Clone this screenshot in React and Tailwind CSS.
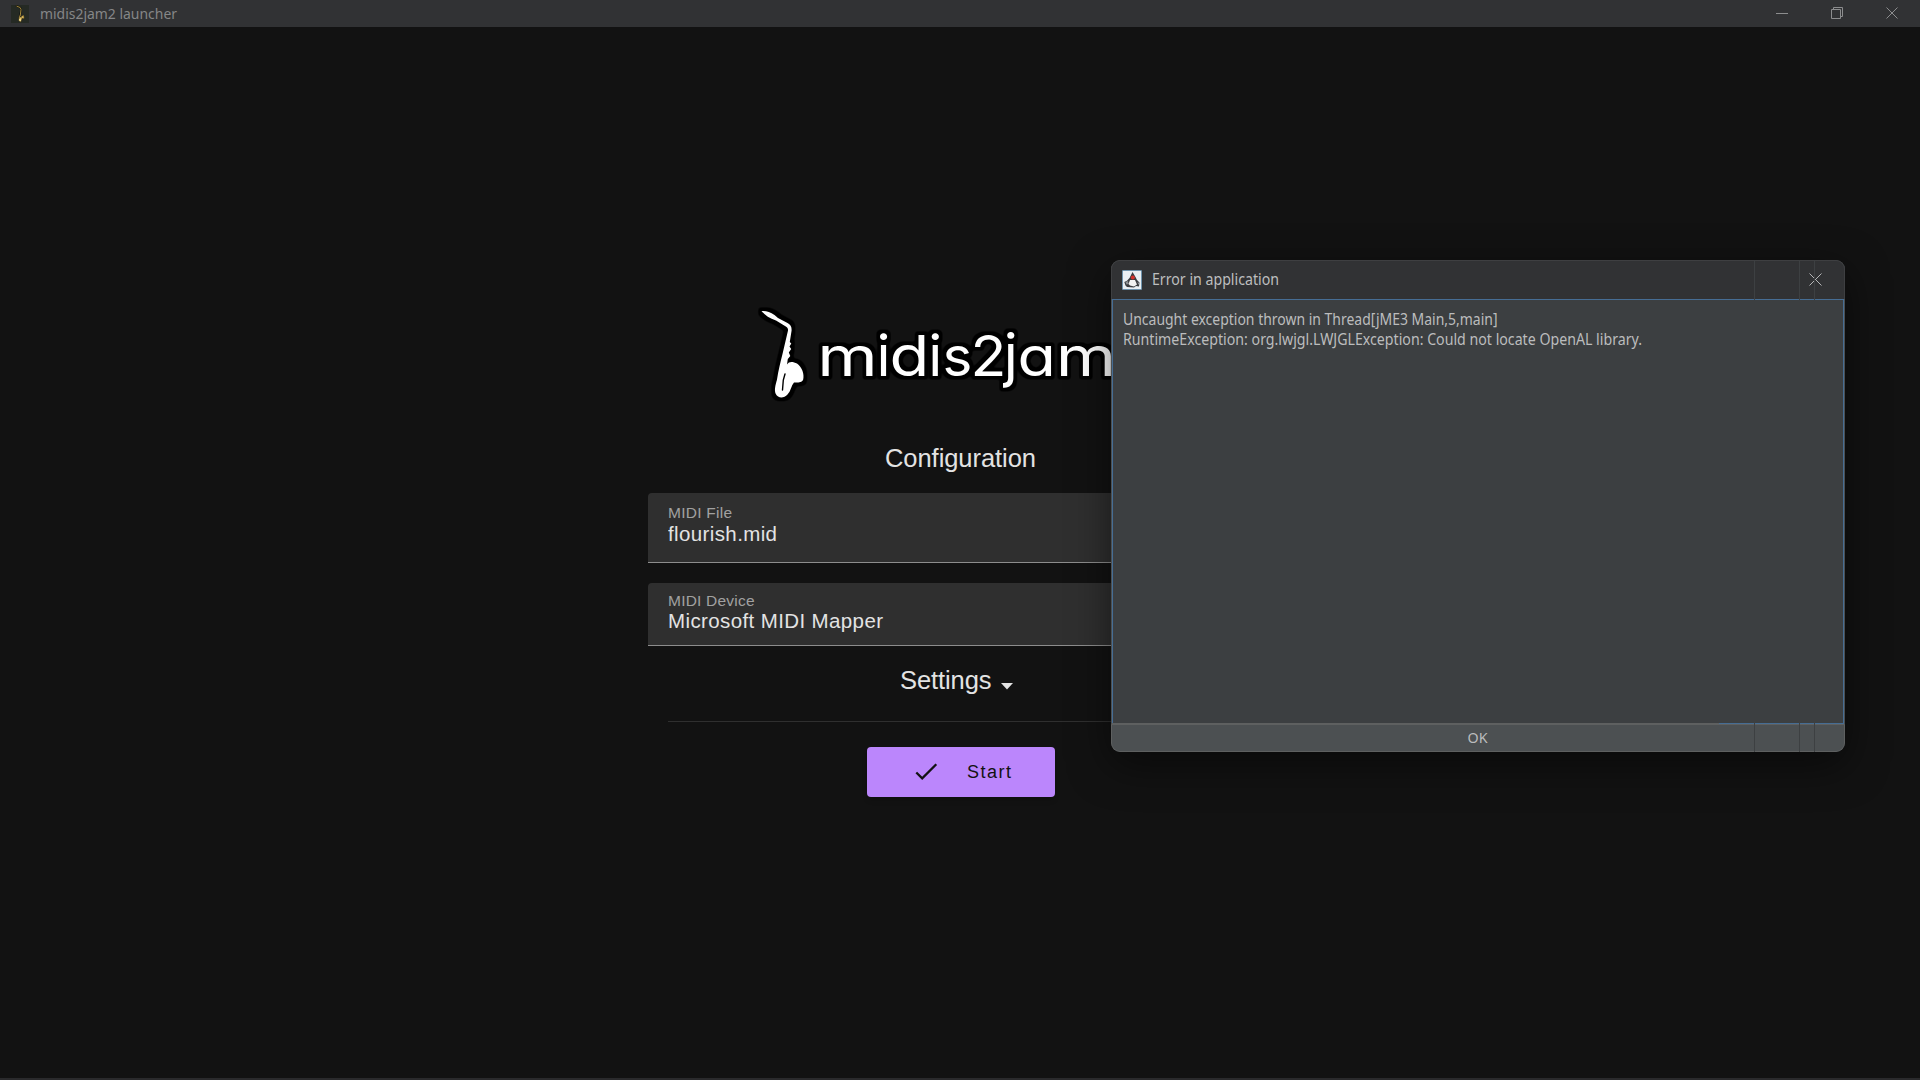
const SAX =
  'M761.500 311 C766 310.5 770 312 774.5 315 L778 318 L787.500 323 C790.800 325 791.800 327 791.600 330.500 L789.800 342 L791.3 343.500 L789.5 346.500 L791.2 349 L788.800 352.500 L790.3 356 L787.8 359 L787 364.500 C789 361 793 361.5 797 363.5 C802 367 804.5 374 803.2 379.500 C802 383 797 382.500 794 382.5 C791 386 791 391 787.5 394.500 C784 398.500 778 398.500 775.8 394 C774 390 775.5 385 776.9 380 C778.500 370 780.5 362 782.5 354 L788 330.500 C788.200 328.500 787.500 327.300 785 326 L776 320.500 C770 318.500 765 315.500 761.500 311 Z';

// glyph, x, horizontal scale, vertical scale
const LETTERS = [
  ['m', 817.2, 1.19, 0.955],
  ['i', 876.5, 1, 0.98],
  ['d', 889.6, 1.12, 0.97],
  ['i', 928.3, 1, 0.98],
  ['s', 942.5, 0.975, 0.955],
  ['2', 970.4, 1.015, 0.97],
  ['j', 1003.7, 1, 1],
  ['a', 1017.6, 1.08, 0.955],
  ['m', 1055.7, 1.19, 0.955],
];

function Logo() {
  return (
    <svg className="block h-[104px] w-[400px]" viewBox="752 302 400 104">
      <defs>
        <filter id="outline" x="752" y="302" width="400" height="104" filterUnits="userSpaceOnUse" colorInterpolationFilters="sRGB">
          <feMorphology in="SourceAlpha" operator="dilate" radius="3" />
          <feGaussianBlur stdDeviation="1.4" />
          <feComponentTransfer result="edge">
            <feFuncR type="linear" slope="0" />
            <feFuncG type="linear" slope="0" />
            <feFuncB type="linear" slope="0" />
            <feFuncA type="linear" slope="3" intercept="-0.5" />
          </feComponentTransfer>
          <feMerge>
            <feMergeNode in="edge" />
            <feMergeNode in="SourceGraphic" />
          </feMerge>
        </filter>
      </defs>
      <g filter="url(#outline)" fill="#fff" fontSize="58" className="font-['Inter',sans-serif] font-normal [font-feature-settings:'cv11']">
        <path d={SAX} />
        {LETTERS.map(([c, x, sx, sy]) => (
          <text key={x} transform={`translate(${x} 376) scale(${sx} ${sy})`}>{c}</text>
        ))}
      </g>
      <path d="M785 374 L783.300 380 L782.500 390" fill="none" stroke="#000" strokeWidth="1.4" strokeLinecap="round" />
    </svg>
  );
}

function MiniSax() {
  return (
    <svg className="block size-[18px]" viewBox="0 0 18 18">
      <rect width="18" height="18" fill="#252a24" />
      <path d="M5 .6 L9.500 2.800 L10 5 L8.700 12" fill="none" stroke="#0b0b08" strokeWidth="1.6" />
      <path d="M5.500 1 L9.200 2.600 L10 4.500 L9.200 11" fill="none" stroke="#a58a3c" strokeWidth="1" />
      <path d="M8.600 10.500 L7.900 15.500 L9.600 16.800 L11 13 L13 13.300 L12.500 10.500 L10.800 11.200 L10 13" fill="#e6c468" stroke="#8a6c22" strokeWidth=".5" />
      <path d="M8.800 14 L9.200 16" stroke="#fff3b0" strokeWidth="1" />
    </svg>
  );
}

function JavaIcon() {
  return (
    <svg className="block size-5" viewBox="0 0 20 20">
      <rect x=".5" y=".5" width="19" height="19" rx=".5" fill="#e9eff4" stroke="#6f93ad" />
      <path d="M10.500 2 L13.500 7 L15 10 L17.500 12.500 L17 16.500 L14 16 L12 17.500 L5 17 L3.500 15.500 L2.300 12 L5 10.800 L7.500 8 Z" fill="#3a3c40" />
      <path d="M3.500 12 L6 11 L6.500 14 L4.500 14.500 Z" fill="#8d9195" />
      <path d="M8 10 L13 10 L15 14.500 L12 16.500 L8 15.500 L6.500 14 Z" fill="#f1f1f1" />
      <path d="M15.500 12 L17 13 L16.500 15 Z" fill="#a0a4a8" />
      <circle cx="10.800" cy="7.600" r="2" fill="#d5302c" />
    </svg>
  );
}

function TitleBar() {
  return (
    <header className="flex h-[27px] shrink-0 items-center bg-[#313234] pl-[11px]">
      <MiniSax />
      <svg className="ml-[11px] block h-5 w-[150px] font-['Noto_Sans',sans-serif]">
        <text x="0" y="15" textLength="137" lengthAdjust="spacingAndGlyphs" fill="#858687" fontSize="15">midis2jam2 launcher</text>
      </svg>
      <svg className="ml-auto block h-[27px] w-[150px]" viewBox="1770 0 150 27" fill="none" stroke="#8c8d8e">
        <path d="M1776 13.500 H1788" />
        <path d="M1831.500 9.500 h9 v9 h-9 z M1833.500 9 V7.500 h9 v9 H1841" />
        <path d="M1886.500 7.500 l11 11 M1897.500 7.500 l-11 11" />
      </svg>
    </header>
  );
}

function Field({ label, value, className, labelWidth, valueWidth, valueY }) {
  return (
    <div className={`w-[624px] rounded-t-[4px] border-b border-[#8d8d8d] bg-[#2f2f2f] pl-[20px] font-['Liberation_Sans',sans-serif] ${className}`}>
      <svg className="block h-[45px] w-[400px]">
        <text x="0" y="15" textLength={labelWidth} fontSize="15.500" fill="#a1a1a1">{label}</text>
        <text x="0" y={valueY} textLength={valueWidth} fontSize="20.500" fill="#e3e3e3">{value}</text>
      </svg>
    </div>
  );
}

function Launcher() {
  return (
    <main className="flex grow flex-col items-center font-['Liberation_Sans',sans-serif] text-[#e3e3e3]">
      <div className="mt-[275px] w-[416px]">
        <Logo />
      </div>
      <h1 className="mt-[37px] h-[32px] text-[25px] leading-[32px]">
        <svg className="block h-8 w-[151px]"><text x="0" y="24" textLength="151" fill="#e3e3e3" fontSize="25.500">Configuration</text></svg>
      </h1>
      <Field className="mt-[18px] h-[70px] pt-[10px]" label="MIDI File" value="flourish.mid" labelWidth="64" valueWidth="109" valueY="38" />
      <Field className="mt-[20px] h-[63px] pt-[8px]" label="MIDI Device" value="Microsoft MIDI Mapper" labelWidth="86.500" valueWidth="215" valueY="37" />
      <div className="mt-[19px] flex h-[32px] w-[120px] items-start">
        <svg className="block h-9 w-[92px]"><text x="0" y="24" textLength="91.500" fill="#e3e3e3" fontSize="25.500">Settings</text></svg>
        <svg className="mt-[18px] ml-[9px] block h-[7px] w-[12px]"><path d="M0 0 H12 L6 6.500 Z" fill="#e3e3e3" /></svg>
      </div>
      <hr className="mt-[24px] w-[584px] border-t border-[#2f2f2f]" />
      <button className="mt-[25px] ml-[2px] flex h-[50px] w-[188px] items-center rounded-[4px] bg-[#bb86fc] shadow-md">
        <svg className="ml-[48px] block h-[18px] w-[23px]" viewBox="0 0 23 18" fill="none" stroke="#121212" strokeWidth="2.300"><path d="M1.300 9.500 L7.200 15.300 L21.300 1.200" /></svg>
        <svg className="ml-[29px] block h-6 w-[48px]"><text x="0" y="17.500" textLength="44" fill="#121212" fontSize="18">Start</text></svg>
      </button>
    </main>
  );
}

function Seams({ className }) {
  return (
    <div className={`pointer-events-none absolute w-[61px] ${className}`}>
      <div className="flex h-full">
        <i className="mr-[44px] w-px bg-[#3d4042]" />
        <i className="mr-[14px] w-px bg-[#3d4042]" />
        <i className="w-px bg-[#3d4042]" />
      </div>
    </div>
  );
}

function ErrorDialog() {
  return (
    <section className="absolute top-[260px] left-[1111px] flex h-[492px] w-[734px] flex-col overflow-hidden rounded-[9px] bg-[#4c5052] font-['Noto_Sans',sans-serif] shadow-[0_12px_40px_rgba(0,0,0,0.5)]">
      <div className="flex h-[39px] shrink-0 items-center rounded-t-[9px] border border-b-0 border-[#3e3f41] bg-[#313234] pl-[10px]">
        <JavaIcon />
        <svg className="ml-[10px] block h-6 w-[140px]"><text x="0" y="17" textLength="127" lengthAdjust="spacingAndGlyphs" fontSize="15.500" fill="#bdbebf">Error in application</text></svg>
        <svg className="mr-[22px] mb-px ml-auto block size-[13px]" fill="none" stroke="#b4b5b6"><path d="M.5 .5 l12 12 M12.500 .5 l-12 12" /></svg>
      </div>
      <div className="mr-px ml-px h-[425px] shrink-0 border border-[#466d94] bg-[#3c3f41] pt-[8px] pl-[10px]">
        <svg className="block h-[50px] w-[560px]" fontSize="15.500" fill="#bbbcbd">
          <text x="0" y="17" textLength="374.500" lengthAdjust="spacingAndGlyphs">Uncaught exception thrown in Thread[jME3 Main,5,main]</text>
          <text x="0" y="37" textLength="519" lengthAdjust="spacingAndGlyphs">RuntimeException: org.lwjgl.LWJGLException: Could not locate OpenAL library.</text>
        </svg>
      </div>
      <div className="flex grow items-center justify-center rounded-b-[9px] border border-[#5e6060] bg-[#4c5052]">
        <svg className="block h-5 w-[22px]"><text x="0.500" y="14.500" textLength="20" lengthAdjust="spacingAndGlyphs" fontSize="14.500" fill="#bbbcbd">OK</text></svg>
      </div>
      <Seams className="top-0 left-[643px] h-[40px]" />
      <Seams className="bottom-0 left-[643px] h-[30px]" />
      <div className="absolute top-[463px] left-px h-px w-[607px] bg-[#5e6060]" />
    </section>
  );
}

export default function App() {
  return (
    <div className="relative flex h-[1080px] w-[1920px] flex-col overflow-hidden border-b-2 border-[#2a2a2c] bg-[#121212]">
      <TitleBar />
      <Launcher />
      <ErrorDialog />
    </div>
  );
}
